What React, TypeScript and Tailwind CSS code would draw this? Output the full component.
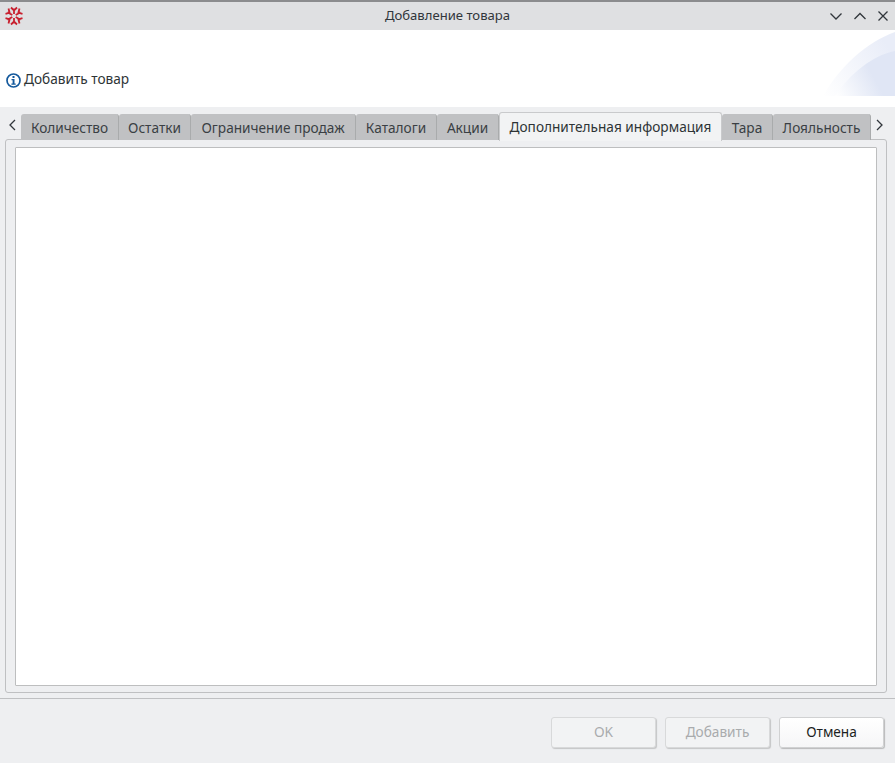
const tabs = [
  { label: "Количество", width: "w-[98px]" },
  { label: "Остатки", width: "w-[72px]" },
  { label: "Ограничение продаж", width: "w-[165px]" },
  { label: "Каталоги", width: "w-[81px]" },
  { label: "Акции", width: "w-[62px]" },
  { label: "Дополнительная информация", width: "w-[223px]", active: true },
  { label: "Тара", width: "w-[51px]" },
  { label: "Лояльность", width: "w-[98px]" },
];

function Snowflake() {
  return (
    <svg width="20" height="20" viewBox="0 0 20 20" fill="none" stroke="#c8202f" strokeWidth="1.800">
      <path d="M10 8V2.500M7 1.500l3 3 3-3" />
      <path d="M10 12v5.500M7 18.500l3-3 3 3" />
      <path d="M8.300 9L3.500 6.200M1.500 7.800l4.100-1.100-1.100-4.100" />
      <path d="M11.700 9l4.800-2.800M18.500 7.800l-4.100-1.100 1.100-4.100" />
      <path d="M8.300 11l-4.800 2.800M1.500 12.200l4.100 1.100-1.100 4.100" />
      <path d="M11.700 11l4.800 2.800M18.500 12.200l-4.100 1.100 1.100 4.100" />
    </svg>
  );
}

function InfoIcon() {
  return (
    <svg width="15" height="15" viewBox="0 0 15 15" fill="none">
      <circle cx="7.500" cy="7.500" r="6.500" stroke="#14599c" strokeWidth="1.700" />
      <rect x="6.500" y="3" width="2" height="2" fill="#14599c" />
      <path d="M5.500 6h3v4.500h1.200v1.200H5.400v-1.200h1.200V7.200H5.500z" fill="#14599c" />
    </svg>
  );
}

function WindowIcon({ d, w }: { d: string; w: number }) {
  return (
    <svg width={w} height="10" viewBox={`0 0 ${w} 10`} fill="none" stroke="#31363b" strokeWidth="1.300">
      <path d={d} />
    </svg>
  );
}

function TabArrow({ d }: { d: string }) {
  return (
    <svg width="8" height="12" viewBox="0 0 8 12" fill="none" stroke="#31363b" strokeWidth="1.300">
      <path d={d} />
    </svg>
  );
}

function Banner() {
  return (
    <svg width="100" height="66" viewBox="0 0 100 66">
      <defs>
        <linearGradient id="b1" x1="0" y1="1" x2="1" y2="0.4">
          <stop offset="0" stopColor="#ffffff" />
          <stop offset="1" stopColor="#e9edf8" />
        </linearGradient>
        <linearGradient id="b2" x1="0" y1="1" x2="1" y2="0.6">
          <stop offset="0" stopColor="#ffffff" />
          <stop offset="0.7" stopColor="#e0e6f5" />
        </linearGradient>
      </defs>
      <path d="M28 66C45 36 72 12 100 2V66Z" fill="url(#b1)" />
      <path d="M40 66C55 44 76 26 100 21V66Z" fill="url(#b2)" />
    </svg>
  );
}

export default function App() {
  return (
    <div className="flex h-[763px] w-[895px] flex-col overflow-hidden bg-[#eeeff1] font-['Noto_Sans',sans-serif] text-[13.65px] text-[#2e3436]">
      <div className="flex h-[30px] shrink-0 items-center border-t-2 border-[#8b8c8e] bg-[#dfe0e2] pr-[7px] pl-1">
        <div className="w-[70px]">
          <Snowflake />
        </div>
        <div className="flex-1 pl-[3px] text-center text-[13.1px] text-[#31363b]">Добавление товара</div>
        <div className="flex w-[70px] items-center justify-end gap-[12px]">
          <WindowIcon w={12} d="M0.500 2.500L6 8L11.500 2.500" />
          <WindowIcon w={12} d="M0.500 8L6 2.500L11.500 8" />
          <WindowIcon w={10} d="M0.500 0.500L9.500 9.500M9.500 0.500L0.500 9.500" />
        </div>
      </div>

      <div className="flex h-[77px] shrink-0 justify-between bg-white pl-[6px]">
        <div className="flex h-[66px] items-end gap-[3px] pb-[8px]">
          <InfoIcon />
          <span className="leading-[18px]">Добавить товар</span>
        </div>
        <Banner />
      </div>

      <div className="relative z-10 flex h-[33px] shrink-0 items-end">
        <div className="flex h-[26px] w-[21px] items-start pt-[5px] pl-[8px]">
          <TabArrow d="M7 1L2 6L7 11" />
        </div>
        {tabs.map((tab) => (
          <div
            key={tab.label}
            className={
              tab.active
                ? `${tab.width} -mb-px flex h-[29px] shrink-0 items-center justify-center rounded-t-[3px] border border-b-0 border-[#c9cacc] bg-[#f2f3f4] text-[#2e3436]`
                : `${tab.width} flex h-[26px] shrink-0 items-center justify-center rounded-t-[3px] border-r border-[#a9abac] bg-[#c0c1c3] pt-[2px] text-[#3a3f44] last:border-r-0`
            }
          >
            {tab.label}
          </div>
        ))}
        <div className="flex h-[26px] flex-1 items-start pt-[5px] pl-[5px]">
          <TabArrow d="M1 1L6 6L1 11" />
        </div>
      </div>

      <div className="mx-[5px] -mt-px flex h-[554px] w-[882px] shrink-0 flex-col rounded-[3px] border border-[#bfc0c2] px-[9px] pt-[7px] pb-[6px]">
        <div className="flex-1 rounded-[1px] border border-[#bdbebf] bg-white" />
      </div>

      <div className="mt-[5px] h-px shrink-0 bg-[#bfc0c2]" />

      <div className="flex flex-1 justify-end gap-[9px] pt-[18px] pr-[11px]">
        <button className="h-[31px] w-[105px] rounded-[3px] border border-[#d8d9da] bg-[#f2f3f4] text-[#a9abad] shadow-[1px_1px_1px_#c4c5c6]">
          OK
        </button>
        <button className="h-[31px] w-[105px] rounded-[3px] border border-[#d8d9da] bg-[#f2f3f4] text-[#a9abad] shadow-[1px_1px_1px_#c4c5c6]">
          Добавить
        </button>
        <button className="h-[31px] w-[105px] rounded-[3px] border border-[#d0d1d2] bg-gradient-to-b from-white to-[#f6f6f7] text-[#1c1f22] shadow-[1px_1px_1px_#b8b9ba]">
          Отмена
        </button>
      </div>
    </div>
  );
}
